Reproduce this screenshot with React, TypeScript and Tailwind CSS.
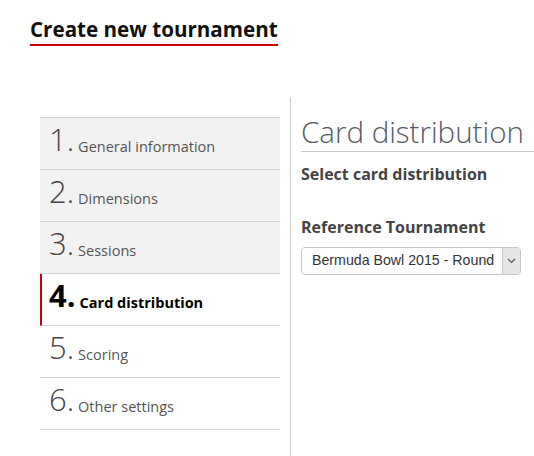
import React from "react";

const steps = [
  { n: "1", label: "General information", done: true },
  { n: "2", label: "Dimensions", done: true },
  { n: "3", label: "Sessions", done: true },
  { n: "4", label: "Card distribution", active: true },
  { n: "5", label: "Scoring" },
  { n: "6", label: "Other settings" },
];

export default function App() {
  return (
    <div className="w-[534px] h-[456px] bg-white overflow-hidden text-[#333]" style={{ fontFamily: '"Open Sans", sans-serif' }}>
      <div className="pl-[30px] pt-[14px]">
        <h1 className="inline-block text-[20.6px] font-bold leading-[30px] text-[#111] border-b-2 border-[#cc0000] pb-[0px]">
          Create new tournament
        </h1>
      </div>
      <div className="flex mt-[51px]">
        <div className="w-[291px] pl-[40px] pr-[10px] pt-[20px] border-r border-[#cccccc] h-[360px] box-border shrink-0">
          <div className="border-t border-[#d4d4d4]">
            {steps.map((s) => (
              <div
                key={s.n}
                className={
                  "h-[52px] border-b border-[#d4d4d4] flex items-end pb-[14px] " +
                  (s.done ? "bg-[#f2f2f2] pl-[9px]" : s.active ? "bg-white border-l-2 border-l-[#cc0000] pl-[7px]" : "bg-white pl-[9px]")
                }
              >
                <span className={"text-[31px] leading-[31px] " + (s.active ? "font-bold text-black" : "font-light text-[#444]")}>
                  {s.n}.
                </span>
                <span className={"ml-[4px] text-[14.5px] leading-[20px] mb-[-2px] " + (s.active ? "font-bold text-black" : "text-[#555]")}>
                  {s.label}
                </span>
              </div>
            ))}
          </div>
        </div>
        <div className="pl-[10px] pt-[16px] flex-1">
          <h2 className="text-[29.5px] font-light text-[#555a66] leading-[37px] border-b border-[#cccccc] pb-[1px]">
            Card distribution
          </h2>
          <div className="mt-[10px] text-[16px] font-bold text-[#444] leading-[24px]">Select card distribution</div>
          <div className="mt-[29px] text-[16px] font-bold text-[#444] leading-[24px]">Reference Tournament</div>
          <div className="mt-[8px] w-[220px] h-[28px] border border-[#c8c8c8] rounded-[4px] flex items-center overflow-hidden">
            <div className="flex-1 pl-[10px] text-[14.2px] text-[#333] whitespace-nowrap overflow-hidden" style={{ fontFamily: '"Liberation Sans", Arial, sans-serif' }}>
              Bermuda Bowl 2015 - Round
            </div>
            <div className="w-[18px] h-full bg-[#e6e6e6] border-l border-[#c8c8c8] flex items-center justify-center">
              <svg width="9" height="6" viewBox="0 0 9 6"><path d="M1 1l3.5 3.5L8 1" fill="none" stroke="#555" strokeWidth="1.2" /></svg>
            </div>
          </div>
        </div>
      </div>
    </div>
  );
}
